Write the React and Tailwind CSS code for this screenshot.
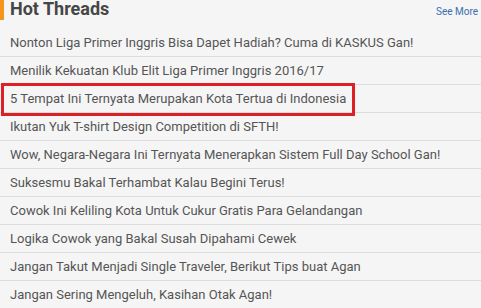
export default function App() {
  const items = [
    "Nonton Liga Primer Inggris Bisa Dapet Hadiah? Cuma di KASKUS Gan!",
    "Menilik Kekuatan Klub Elit Liga Primer Inggris 2016/17",
    "5 Tempat Ini Ternyata Merupakan Kota Tertua di Indonesia",
    "Ikutan Yuk T-shirt Design Competition di SFTH!",
    "Wow, Negara-Negara Ini Ternyata Menerapkan Sistem Full Day School Gan!",
    "Suksesmu Bakal Terhambat Kalau Begini Terus!",
    "Cowok Ini Keliling Kota Untuk Cukur Gratis Para Gelandangan",
    "Logika Cowok yang Bakal Susah Dipahami Cewek",
    "Jangan Takut Menjadi Single Traveler, Berikut Tips buat Agan",
    "Jangan Sering Mengeluh, Kasihan Otak Agan!",
  ];
  return (
    <div className="w-[481px] h-[308px] overflow-hidden bg-[#f5f5f5] font-['Roboto',sans-serif]">
      <div className="flex items-start justify-between h-[29px]">
        <div className="flex items-start">
          <div className="w-[4px] h-[20px] bg-[#f7941d]" />
          <div className="ml-[6px] -mt-[1px] text-[18px] leading-[20px] font-bold text-[#464646]">Hot Threads</div>
        </div>
        <div className="mt-[6px] mr-[3px] text-[10px] leading-[12px] text-[#3a6fb0]">See More</div>
      </div>
      <div className="flex flex-col">
        {items.map((t, i) => (
          <div key={i} className="relative h-[28px] border-b border-[#dcdcdc] flex items-center">
            <span className="pl-[10px] text-[13px] text-[#555555] whitespace-nowrap">{t}</span>
            {i === 2 && (
              <div className="absolute left-[1px] w-[354px] top-[-2px] h-[33px] border-[3px] border-[#dd1f26]" />
            )}
          </div>
        ))}
      </div>
    </div>
  );
}
